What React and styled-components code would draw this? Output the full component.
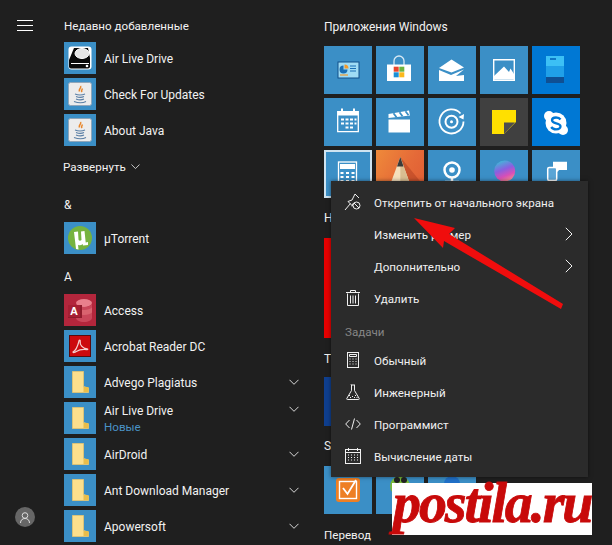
import React from "react";
import styled, { createGlobalStyle } from "styled-components";

const Global = createGlobalStyle`
  html, body { margin: 0; padding: 0; background: #1f1f1f; }
  body { font-family: Roboto, "Noto Sans", Arial, sans-serif; color: #fff; }
`;

const Page = styled.div`
  position: relative;
  width: 612px;
  height: 545px;
  overflow: hidden;
  display: grid;
  grid-template-columns: 64px 260px 1fr;
  background: #1f1f1f;
  font-size: 12px;
  line-height: 20px;
`;

const Rail = styled.nav`
  display: flex;
  flex-direction: column;
  justify-content: space-between;
  align-items: center;
  padding: 20px 14px 18px 0;
`;
const Burger = styled.div`
  width: 16px;
  height: 11px;
  border-top: 1px solid #fff;
  border-bottom: 1px solid #fff;
  box-sizing: border-box;
  display: flex;
  align-items: center;
  &::before { content: ""; display: block; width: 100%; height: 1px; background: #fff; }
`;
const Avatar = styled.div`
  width: 20px;
  height: 20px;
  border-radius: 50%;
  background: #666;
  display: flex;
  align-items: center;
  justify-content: center;
`;

const ListCol = styled.div`
  padding-top: 15px;
  display: flex;
  flex-direction: column;
`;
const Heading = styled.div`
  height: 20px;
  box-sizing: border-box;
  padding-top: 1px;
  margin-top: ${p => p.$top || 0}px;
  margin-bottom: ${p => p.$bottom || 0}px;
  margin-left: ${p => p.$left || 0}px;
  color: #f2f2f2;
  font-size: ${p => p.$size || 12}px;
  white-space: nowrap;
  display: flex;
  align-items: center;
  gap: 5px;
`;
const Rows = styled.div`
  display: flex;
  flex-direction: column;
  gap: 4px;
`;
const Row = styled.div`
  height: 32px;
  display: flex;
  align-items: center;
  gap: 8px;
  padding-right: 24px;
`;
const AppIcon = styled.div`
  width: 32px;
  height: 32px;
  flex: none;
  background: ${p => p.$bg || "#3b8fc6"};
  display: flex;
  align-items: center;
  justify-content: center;
`;
const RowText = styled.div`
  flex: 1;
  padding-top: 2px;
  color: #f2f2f2;
  white-space: nowrap;
`;
const TwoLine = styled.div`
  flex: 1;
  align-self: flex-start;
  display: flex;
  flex-direction: column;
  padding-top: 1px;
  line-height: 16px;
  color: #f2f2f2;
`;
const NewTag = styled.span`
  color: #4a92c6;
  font-size: 11.6px;
`;
const RowChevron = styled.div`
  width: 10px;
  height: 10px;
  margin-right: 1px;
  align-self: ${p => (p.$top ? "flex-start" : "center")};
  margin-top: ${p => (p.$top ? 2 : 0)}px;
  display: flex;
`;

const TilesCol = styled.div`
  padding-top: 16px;
  display: flex;
  flex-direction: column;
`;
const TileGrid = styled.div`
  display: grid;
  grid-template-columns: repeat(5, 48px);
  grid-auto-rows: 48px;
  gap: 4px;
`;
const TileRow = styled.div`
  display: flex;
  gap: 4px;
`;
const Tile = styled.div`
  width: ${p => p.$w || 48}px;
  height: ${p => p.$h || 48}px;
  background: ${p => p.$bg || "#3b8fc6"};
  box-sizing: border-box;
  border: ${p => (p.$selected ? "2px solid #cfe3f0" : "none")};
  display: flex;
  align-items: center;
  justify-content: center;
  overflow: hidden;
  flex: none;
`;

const Menu = styled.div`
  position: absolute;
  left: 331px;
  top: 181px;
  width: 257px;
  height: 296px;
  box-sizing: border-box;
  padding: 5px 0;
  background: #2b2b2b;
  display: flex;
  flex-direction: column;
  font-size: 11.6px;
  box-shadow: 0 0 4px rgba(0, 0, 0, 0.5);
`;
const MenuItem = styled.div`
  height: 32px;
  flex: none;
  display: flex;
  align-items: center;
  padding-right: 15px;
  color: #f0f0f0;
`;
const MenuIcon = styled.div`
  width: 43px;
  flex: none;
  display: flex;
  justify-content: center;
  padding-left: 1px;
  box-sizing: border-box;
`;
const MenuLabel = styled.div`
  flex: 1;
  padding-top: 2px;
  white-space: nowrap;
`;
const MenuHeader = styled.div`
  height: 30px;
  flex: none;
  padding: 8px 0 0 14px;
  box-sizing: border-box;
  color: #868686;
`;

const ArrowArt = styled.svg`
  position: absolute;
  left: 0;
  top: 0;
  pointer-events: none;
`;

const Watermark = styled.div`
  position: absolute;
  left: 392px;
  top: 483px;
  width: 200px;
  height: 52px;
  box-sizing: border-box;
  padding-left: 1px;
  background: #fff;
  color: #c80a0a;
  font-family: "Liberation Serif", "Times New Roman", serif;
  font-style: italic;
  font-weight: 700;
  font-size: 56px;
  letter-spacing: -2.1px;
  line-height: 40px;
  white-space: nowrap;
  -webkit-text-stroke: 0.8px #c80a0a;
`;

const Folder = () => (
  <svg width="17" height="22" viewBox="0 0 17 22">
    <path d="M0.5 0.5H11.500V15.500L16.500 17V21.500H0.5Z" fill="#fcdf8c" stroke="#d8c27a" strokeWidth="1" />
    <path d="M11.500 16H16.500V21H11.500Z" fill="#e9bd4a" />
  </svg>
);
const Java = () => (
  <svg width="24" height="24" viewBox="0 0 24 24">
    <rect x="0.5" y="0.5" width="23" height="23" rx="2" fill="#ececec" stroke="#8fa6ba" />
    <path d="M12.500 4c1.500 2-2.500 3-1 5.500M14.500 6.500c-1 1.500-1.500 2-.5 3.500" stroke="#e8862a" strokeWidth="1.500" fill="none" />
    <path d="M7 12c3 1.200 7 1.200 10 0M8 14.500c2.500 1 6 1 8 0M8 17c2.500 1 6 1 8 0M6 19.500c4 1.500 9 1.500 12 0" stroke="#5a7fa5" strokeWidth="1.100" fill="none" />
  </svg>
);
const Drive = () => (
  <svg width="24" height="24" viewBox="0 0 24 24">
    <rect x="0.5" y="0.5" width="23" height="23" rx="3" fill="#fff" />
    <path d="M6 2h14l2 10v8.500a2 2 0 0 1-2 2H3a2 2 0 0 1-2-2V14Z" fill="#0a0a0a" />
    <ellipse cx="14" cy="7.500" rx="7" ry="5" fill="#e5e5e5" stroke="#fff" />
    <path d="M3 17.500H21" stroke="#fff" strokeWidth="1" />
    <circle cx="19" cy="20" r="1.300" fill="#fff" />
  </svg>
);
const UTorrent = () => (
  <svg width="24" height="24" viewBox="0 0 24 24">
    <circle cx="12" cy="12" r="12" fill="#76b33f" />
    <path d="M6 6l4-.5.500 8c.3 1.500 2 1.500 3 .5l-.5-8.500 3.500-.5 1.200 11.500 2.300-.5v3l-5 .5-.3-1.500c-1.500 1.500-3.500 1.800-4.700.7l.5 4.800-2.500-.5Z" fill="#fff" />
  </svg>
);
const Access = () => (
  <svg width="26" height="26" viewBox="0 0 26 26">
    <ellipse cx="17" cy="6" rx="8" ry="4" fill="#e8808c" />
    <path d="M9 6v15c0 2.200 3.600 4 8 4s8-1.800 8-4V6c0 2.200-3.600 4-8 4S9 8.200 9 6Z" fill="#c9475a" />
    <path d="M9 10.500c1.500 1.500 4.500 2.500 8 2.500s6.500-1 8-2.500v5c-1.500 1.500-4.500 2.500-8 2.500s-6.500-1-8-2.500Z" fill="#d9636f" />
    <rect x="1" y="8" width="14" height="13" fill="#8e1c2c" />
    <rect x="1" y="8" width="12" height="12" fill="#a61f33" />
    <text x="7" y="18" textAnchor="middle" fontFamily="Liberation Sans" fontWeight="700" fontSize="11" fill="#fff">A</text>
  </svg>
);
const Acrobat = () => (
  <svg width="22" height="22" viewBox="0 0 22 22">
    <rect width="22" height="22" fill="#5a0a0c" />
    <rect x="1" y="1" width="20" height="20" fill="#cc0a0e" />
    <path d="M4 17c2-1 4.500-5 6-11 .3-1.500 1.500-1 1.200.5-.5 3 2 7 6.800 7.300 1.200.1 1 1-.2.8-4-.5-8 .3-10.500 1.900-1.500 1-3 1.500-3.300.5Z" fill="none" stroke="#f6d0d0" strokeWidth="1.200" />
  </svg>
);

const Tick = ({ color = "#d8d8d8", size = 10 }) => (
  <svg width={size} height={size} viewBox="0 0 10 10">
    <path d="M0.500 2.800 5 7.300 9.500 2.800" fill="none" stroke={color} strokeWidth="1" />
  </svg>
);

const IconSvg = ({ children }) => (
  <svg width="48" height="48" viewBox="0 0 48 48">{children}</svg>
);

const TDash = () => (
  <IconSvg>
    <rect x="14" y="16" width="21" height="16" fill="#9fdcf5" stroke="#11508a" />
    <path d="M19.500 19.500a4 4 0 1 0 4 4h-4Z" fill="#1a6fb5" />
    <path d="M20.500 18.500a4 4 0 0 1 4 4h-4Z" fill="#f39a2c" />
    <path d="M26 20h6M26 22.500h6M26 25h6" stroke="#1a6fb5" strokeWidth="1" />
    <path d="M16 29h8" stroke="#f39a2c" strokeWidth="1.200" />
  </IconSvg>
);
const TStore = () => (
  <IconSvg>
    <path d="M18 19v-4a5 5 0 0 1 10 0v4" fill="none" stroke="#fff" strokeWidth="1.300" opacity=".8" />
    <path d="M11 18.500h24V35H11Z" fill="#fff" />
    <rect x="17.700" y="20.700" width="5" height="5" fill="#e8452c" />
    <rect x="23.300" y="20.700" width="5" height="5" fill="#6cb33f" />
    <rect x="17.700" y="26.300" width="5" height="5" fill="#1a8fd6" />
    <rect x="23.300" y="26.300" width="5" height="5" fill="#fbb81c" />
  </IconSvg>
);
const TMail = () => (
  <IconSvg>
    <path d="M11 22 23.500 13.500 36 21.500 23.500 26.500Z" fill="#fff" />
    <path d="M11 24 23 29 36 23.500 28 30 36 29V35H11Z" fill="#fff" />
  </IconSvg>
);
const TPhotos = () => (
  <IconSvg>
    <path d="M13.700 13.700H34.300V34.300H13.700Z" fill="none" stroke="#fff" strokeWidth="1.400" />
    <path d="M14 33.500V30L24 20.500 29 26 30.500 22.500 34 28V33.500Z" fill="#fff" />
  </IconSvg>
);
const TBox = () => (
  <IconSvg>
    <rect x="14" y="30" width="18" height="7" fill="#0f4f93" />
    <rect x="14" y="10" width="18" height="10" fill="#3cc0f5" />
    <rect x="14" y="20" width="18" height="11" fill="#20a0e8" />
    <rect x="18" y="12" width="6" height="2" fill="#0f77c5" />
  </IconSvg>
);
const TCalendar = () => (
  <IconSvg>
    <path d="M13.700 13.700h20.600V33.700H13.700Z" fill="none" stroke="#fff" strokeWidth="1.300" />
    <path d="M14 13.500h20v4H14Z" fill="#fff" />
    <path d="M18 10.500v4M30 10.500v4" stroke="#fff" strokeWidth="2" />
    <path d="M17 20.500h3v2h-3ZM21.500 20.500h3v2h-3ZM26 20.500h3v2h-3ZM30.500 20.500h2v2h-2ZM17 24.500h3v2h-3ZM21.500 24.500h3v2h-3ZM26 24.500h3v2h-3ZM30.500 24.500h2v2h-2ZM21.500 28.500h3v2h-3ZM26 28.500h3v2h-3Z" fill="#fff" />
  </IconSvg>
);
const TFilm = () => (
  <IconSvg>
    <path d="M12.500 21.500H34V34.500H12.500Z" fill="#fff" />
    <path d="M12.500 16 33 12.500 34 17.500 12.500 20Z" fill="#fff" />
    <path d="M17.500 15.300l3 4M23.500 14.300l3 4M29.500 13.300l3 4" stroke="#3b8fc6" strokeWidth="1.800" />
  </IconSvg>
);
const TGroove = () => (
  <IconSvg>
    <path d="M32.500 15.500a12 12 0 1 0 3 8" fill="none" stroke="#fff" strokeWidth="1.800" />
    <path d="M36 15 35.500 20.500 30.500 18Z" fill="#fff" transform="translate(0 1)" />
    <circle cx="23.500" cy="23.700" r="6" fill="none" stroke="#fff" strokeWidth="2" />
    <circle cx="23.500" cy="23.700" r="1.500" fill="#fff" />
  </IconSvg>
);
const TSticky = () => (
  <IconSvg>
    <path d="M12 12H36V24L24 36H12Z" fill="#ffe000" />
    <path d="M24 24.500H35L24 36Z" fill="#4d4d4d" />
  </IconSvg>
);
const TSkype = () => (
  <IconSvg>
    <circle cx="24" cy="25" r="10.500" fill="#fff" />
    <circle cx="17" cy="18" r="5" fill="#fff" />
    <circle cx="31" cy="32" r="5" fill="#fff" />
    <path d="M28.500 21.500c-1-1.500-2.500-2-4.500-2-2.500 0-4 1.200-4 2.800 0 4 8.500 2 8.500 6 0 1.700-1.800 3-4.500 3-2.200 0-3.800-.8-4.800-2.300" fill="none" stroke="#0078d4" strokeWidth="2.300" />
  </IconSvg>
);
const TCalc = () => (
  <svg width="44" height="44" viewBox="0 0 44 44">
    <rect x="12.500" y="10" width="18" height="25" fill="none" stroke="#fff" strokeWidth="1.300" />
    <rect x="14" y="12" width="15" height="5" fill="#fff" />
    <path d="M14.500 20h3v2h-3ZM20 20h3v2h-3ZM25.500 20h3v2h-3ZM14.500 24h3v2h-3ZM20 24h3v2h-3ZM25.500 24h3v2h-3ZM14.500 28h3v2h-3ZM20 28h3v2h-3ZM25.500 28h3v2h-3Z" fill="#fff" />
  </svg>
);
const PencilTile = styled(Tile)`
  background: linear-gradient(120deg, #ef8a3a 0%, #e56a38 55%, #de5b33 100%);
`;
const TPencil = () => (
  <IconSvg>
    <path d="M24.300 7 48 36V48H33Z" fill="#a83a1e" opacity=".45" />
    <path d="M24.300 7 15.500 31V48H33V31Z" fill="#f5e0bd" />
    <path d="M24.300 7V48H33V31Z" fill="#d9bd91" />
    <path d="M24.300 7 21 16.500H27.500Z" fill="#3a3a3a" />
  </IconSvg>
);
const TCam = () => (
  <IconSvg>
    <circle cx="24" cy="20" r="7.500" fill="none" stroke="#fff" strokeWidth="2.500" />
    <circle cx="24" cy="20" r="2.800" fill="#fff" />
    <path d="M24 28v3M17 32h14" stroke="#fff" strokeWidth="2.500" />
  </IconSvg>
);
const TOrb = () => (
  <IconSvg>
    <defs>
      <linearGradient id="orb" x1="0.2" y1="0" x2="0.6" y2="1">
        <stop offset="0" stopColor="#3ac0d8" />
        <stop offset="0.45" stopColor="#8a5fe0" />
        <stop offset="0.75" stopColor="#d84fb8" />
        <stop offset="1" stopColor="#f58a90" />
      </linearGradient>
    </defs>
    <circle cx="24.700" cy="21" r="10.500" fill="url(#orb)" />
  </IconSvg>
);
const TPhone = () => (
  <IconSvg>
    <path d="M21 11.700h14V20h-8l-1.500 2-1-2H21Z" fill="#fff" />
    <rect x="15.700" y="17.500" width="9" height="13" rx="1.500" fill="#5aa5d6" stroke="#fff" strokeWidth="1.500" />
  </IconSvg>
);
const TCheck = () => (
  <IconSvg>
    <rect x="12" y="12" width="24" height="24" rx="3" fill="#ee7f24" />
    <rect x="15.500" y="15.500" width="17" height="17" fill="none" stroke="#fff" strokeWidth="1.400" />
    <path d="M19 22l4.500 6L32 14" fill="none" stroke="#fff" strokeWidth="1.800" />
  </IconSvg>
);
const TGreen = () => (
  <IconSvg>
    <circle cx="24" cy="20" r="10" fill="#79b93a" />
    <circle cx="21" cy="14" r="3" fill="#222" />
    <circle cx="28" cy="14" r="3" fill="#222" />
  </IconSvg>
);
const TGlobe = () => (
  <IconSvg>
    <circle cx="24" cy="18" r="8" fill="#2070c8" />
  </IconSvg>
);

const StrokeIcon = styled.svg`
  fill: none;
  stroke: #f0f0f0;
  stroke-width: 1;
  display: block;
`;

const IUnpin = () => (
  <StrokeIcon width="18" height="18" viewBox="0 0 18 18">
    <path d="M1 17 6.500 10.500M4 8.500l4-1.500 3-6 4 4M8 13.500l1-3" />
    <path d="M4 8.500 8.500 13" />
    <circle cx="12.500" cy="12.500" r="3.500" />
    <path d="M10 10l5 5" />
  </StrokeIcon>
);
const ITrash = () => (
  <StrokeIcon width="14" height="16" viewBox="0 0 14 16">
    <path d="M1.500 3.500V15.500H12.500V3.500M0 2.500H14M4.500 2.500V.5H9.500V2.500M4.500 5.500V13.500M7 5.500V13.500M9.500 5.500V13.500" />
  </StrokeIcon>
);
const ICalc = () => (
  <StrokeIcon width="12" height="16" viewBox="0 0 12 16">
    <rect x="0.500" y="0.500" width="11" height="15" />
    <path d="M2.500 2.500H9.500V4.500H2.500Z" />
    <path d="M2.500 7h1M5.500 7h1M8.500 7h1M2.500 9.500h1M5.500 9.500h1M8.500 9.500h1M2.500 12h1M5.500 12h1M8.500 12h1" />
  </StrokeIcon>
);
const IFlask = () => (
  <StrokeIcon width="14" height="16" viewBox="0 0 14 16">
    <path d="M5 .5V1M5 1h4M5.500 1V6.500L.8 14.500Q.5 15.500 1.500 15.500H12.500Q13.500 15.500 13.200 14.500L8.500 6.500V1" />
    <path d="M3 11.500h1M6 12.500h1M9 11.500h1M4 13.500h1M8 13.500h1M10.500 13.500h1" />
  </StrokeIcon>
);
const ICode = () => (
  <StrokeIcon width="16" height="12" viewBox="0 0 16 12">
    <path d="M4.500 2 .7 6l3.800 4M11.500 2l3.800 4-3.800 4M9.500 .5 6.500 11.500" />
  </StrokeIcon>
);
const IDate = () => (
  <StrokeIcon width="16" height="16" viewBox="0 0 16 16">
    <rect x="0.500" y="1.500" width="15" height="14" />
    <path d="M.5 4.500H15.500M3.500 0V3M12.500 0V3" />
    <path d="M3 7h1M6 7h1M9 7h1M12 7h1M3 9.500h1M6 9.500h1M9 9.500h1M12 9.500h1M3 12h1M6 12h1M9 12h1M12 12h1" />
  </StrokeIcon>
);
const IChevronRight = () => (
  <StrokeIcon width="8" height="14" viewBox="0 0 8 14">
    <path d="M.8 .8 7 7 .8 13.200" />
  </StrokeIcon>
);

const folders = ["Advego Plagiatus", "Air Live Drive", "AirDroid", "Ant Download Manager", "Apowersoft"];

const App = () => (
  <Page>
    <Global />
    <Rail>
      <Burger />
      <Avatar>
        <svg width="10" height="11" viewBox="0 0 10 11" fill="none" stroke="#ddd">
          <circle cx="5" cy="3.500" r="2.800" />
          <path d="M.5 11c0-3 2-4.500 4.500-4.500S9.500 8 9.500 11" />
        </svg>
      </Avatar>
    </Rail>

    <ListCol>
      <Heading $bottom={7} $size={11.6}>Недавно добавленные</Heading>
      <Rows>
        <Row><AppIcon><Drive /></AppIcon><RowText>Air Live Drive</RowText></Row>
        <Row><AppIcon><Java /></AppIcon><RowText>Check For Updates</RowText></Row>
        <Row><AppIcon><Java /></AppIcon><RowText>About Java</RowText></Row>
      </Rows>
      <Heading $top={10} $left={-1} $size={11.6}>Развернуть <Tick size={9} /></Heading>
      <Heading $top={18} $bottom={8}>&amp;</Heading>
      <Rows>
        <Row><AppIcon><UTorrent /></AppIcon><RowText>µTorrent</RowText></Row>
      </Rows>
      <Heading $top={12} $bottom={8}>A</Heading>
      <Rows>
        <Row><AppIcon $bg="#b3263c"><Access /></AppIcon><RowText>Access</RowText></Row>
        <Row><AppIcon><Acrobat /></AppIcon><RowText>Acrobat Reader DC</RowText></Row>
        {folders.map(name => (
          <Row key={name}>
            <AppIcon><Folder /></AppIcon>
            {name === "Air Live Drive" ? (
              <TwoLine>
                <span>{name}</span>
                <NewTag>Новые</NewTag>
              </TwoLine>
            ) : (
              <RowText>{name}</RowText>
            )}
            <RowChevron $top={name === "Air Live Drive"}><Tick /></RowChevron>
          </Row>
        ))}
      </Rows>
    </ListCol>

    <TilesCol>
      <Heading $bottom={10}>Приложения Windows</Heading>
      <TileGrid>
        <Tile><TDash /></Tile>
        <Tile><TStore /></Tile>
        <Tile><TMail /></Tile>
        <Tile><TPhotos /></Tile>
        <Tile $bg="#0078d4"><TBox /></Tile>
        <Tile><TCalendar /></Tile>
        <Tile><TFilm /></Tile>
        <Tile><TGroove /></Tile>
        <Tile $bg="#404040"><TSticky /></Tile>
        <Tile $bg="#0078d4"><TSkype /></Tile>
        <Tile $selected><TCalc /></Tile>
        <PencilTile><TPencil /></PencilTile>
        <Tile><TCam /></Tile>
        <Tile><TOrb /></Tile>
        <Tile><TPhone /></Tile>
      </TileGrid>
      <Heading $top={9} $bottom={11}>Н</Heading>
      <Tile $w={100} $h={100} $bg="#e60000" />
      <Heading $top={10} $bottom={9}>Т</Heading>
      <Tile $h={49} $bg="#0f3f8f" />
      <Heading $top={9} $bottom={11}>S</Heading>
      <TileRow>
        <Tile><TCheck /></Tile>
        <Tile><TGreen /></Tile>
        <Tile><TGlobe /></Tile>
      </TileRow>
      <Heading $top={10} $size={11.6}>Перевод</Heading>
    </TilesCol>

    <Menu>
      <MenuItem><MenuIcon><IUnpin /></MenuIcon><MenuLabel>Открепить от начального экрана</MenuLabel></MenuItem>
      <MenuItem><MenuIcon /><MenuLabel>Изменить размер</MenuLabel><IChevronRight /></MenuItem>
      <MenuItem><MenuIcon /><MenuLabel>Дополнительно</MenuLabel><IChevronRight /></MenuItem>
      <MenuItem><MenuIcon><ITrash /></MenuIcon><MenuLabel>Удалить</MenuLabel></MenuItem>
      <MenuHeader>Задачи</MenuHeader>
      <MenuItem><MenuIcon><ICalc /></MenuIcon><MenuLabel>Обычный</MenuLabel></MenuItem>
      <MenuItem><MenuIcon><IFlask /></MenuIcon><MenuLabel>Инженерный</MenuLabel></MenuItem>
      <MenuItem><MenuIcon><ICode /></MenuIcon><MenuLabel>Программист</MenuLabel></MenuItem>
      <MenuItem><MenuIcon><IDate /></MenuIcon><MenuLabel>Вычисление даты</MenuLabel></MenuItem>
    </Menu>

    <ArrowArt width="612" height="545" viewBox="0 0 612 545">
      <path d="M414 218 455 228 449 234 563 304 561 309 444 241 443 248Z" fill="#f00d0d" />
    </ArrowArt>

    <Watermark>postila.ru</Watermark>
  </Page>
);

export default App;
